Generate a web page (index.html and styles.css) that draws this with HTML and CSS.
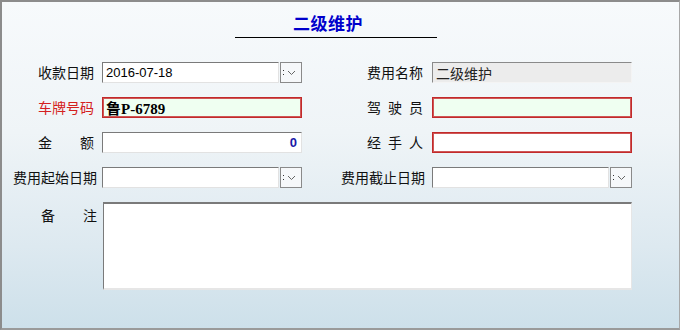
FILE: index.html
```html
<!DOCTYPE html>
<html lang="zh-CN">
<head>
    <meta charset="UTF-8">
    <title>二级维护</title>
    <link rel="stylesheet" href="styles.css">
</head>
<body>
    <div class="window">
        <div class="title-bar">
            <span class="title">二级维护</span>
        </div>

        <div class="form">
            <!-- 第一行 -->
            <label class="lbl">收款日期</label>
            <div class="date-field">
                <input class="txt" type="text" value="2016-07-18">
                <span class="drop-btn">
                    <svg width="20" height="19" viewBox="0 0 20 19"><rect x="2" y="7" width="1" height="1" fill="#333"/><rect x="2" y="11" width="1" height="1" fill="#333"/><path d="M7 8 L10.5 11.5 L14 8" fill="none" stroke="#666" stroke-width="1"/></svg>
                </span>
            </div>
            <label class="lbl lbl-r">费用名称</label>
            <input class="txt readonly" type="text" value="二级维护" readonly>

            <!-- 第二行 -->
            <label class="lbl red">车牌号码</label>
            <input class="txt must plate" type="text" value="鲁P-6789">
            <label class="lbl lbl-r">驾驶员</label>
            <input class="txt must" type="text" value="">

            <!-- 第三行 -->
            <label class="lbl">金额</label>
            <input class="txt money" type="text" value="0">
            <label class="lbl lbl-r">经手人</label>
            <input class="txt must white" type="text" value="">

            <!-- 第四行 -->
            <label class="lbl lbl-long">费用起始日期</label>
            <div class="date-field">
                <input class="txt" type="text" value="">
                <span class="drop-btn">
                    <svg width="20" height="19" viewBox="0 0 20 19"><rect x="2" y="7" width="1" height="1" fill="#333"/><rect x="2" y="11" width="1" height="1" fill="#333"/><path d="M7 8 L10.5 11.5 L14 8" fill="none" stroke="#666" stroke-width="1"/></svg>
                </span>
            </div>
            <label class="lbl lbl-r lbl-long">费用截止日期</label>
            <div class="date-field">
                <input class="txt" type="text" value="">
                <span class="drop-btn">
                    <svg width="20" height="19" viewBox="0 0 20 19"><rect x="2" y="7" width="1" height="1" fill="#333"/><rect x="2" y="11" width="1" height="1" fill="#333"/><path d="M7 8 L10.5 11.5 L14 8" fill="none" stroke="#666" stroke-width="1"/></svg>
                </span>
            </div>

            <!-- 备注 -->
            <label class="lbl lbl-top">备注</label>
            <textarea class="memo"></textarea>
        </div>
    </div>
</body>
</html>
```

FILE: styles.css
```css
body {
    margin: 0;
    font-family: "Noto Sans CJK SC", "Noto Sans", sans-serif;
    font-size: 14px;
    color: #111;
}
.window {
    width: 680px;
    height: 330px;
    box-sizing: border-box;
    border-top: 2px solid #8c8c8c;
    border-left: 2px solid #8c8c8c;
    border-right: 1px solid #a8a8a8;
    border-bottom: 2px solid #9a9a9a;
    background: linear-gradient(to bottom, #f7fafc 0%, #eff4f7 40%, #dde9f0 75%, #cde0ea 100%);
}
.title-bar {
    margin-left: 233px;
    width: 202px;
    height: 36px;
    box-sizing: border-box;
    border-bottom: 1px solid #000;
    padding: 11px 16px 0 0;
    text-align: center;
}
.title {
    font-size: 17px;
    line-height: 20px;
    font-weight: bold;
    color: #0000cc;
    letter-spacing: 0.5px;
}
.form {
    margin-top: 24px;
    display: grid;
    grid-template-columns: 100px 200px 130px 200px;
    grid-auto-rows: 21px;
    row-gap: 14px;
    align-items: center;
}
.lbl {
    justify-self: end;
    width: 56px;
    margin-right: 8px;
    line-height: 21px;
    text-align: justify;
    text-align-last: justify;
    white-space: nowrap;
}
.lbl-r {
    margin-right: 9px;
}
.lbl-long {
    width: auto;
    margin-right: 5px;
    text-align-last: auto;
}
.lbl-r.lbl-long {
    margin-right: 7px;
}
.red {
    color: #d42020;
}
.lbl-top {
    align-self: start;
    line-height: 18px;
    padding-top: 4px;
    margin-right: 5px;
}
.txt {
    width: 100%;
    height: 21px;
    box-sizing: border-box;
    margin: 0;
    padding: 0 3px;
    border-top: 1px solid #7a7a7a;
    border-left: 1px solid #7a7a7a;
    border-right: 1px solid #e2e2e2;
    border-bottom: 1px solid #e2e2e2;
    background: #fff;
    font-family: "Liberation Sans", "Noto Sans CJK SC", sans-serif;
    font-size: 13px;
    color: #000;
    outline: none;
}
.readonly {
    background: #ececec;
    font-family: "Noto Sans CJK SC", sans-serif;
    font-size: 14px;
    color: #222;
    border-top-color: #8a8a8a;
    border-left-color: #8a8a8a;
    border-right-color: #f4f4f4;
    border-bottom-color: #f4f4f4;
}
.must {
    border: 1px solid #c22a2a;
    box-shadow: inset 0 0 0 1px #cf5656;
    background: #effff1;
}
.white {
    background: #fff;
}
.plate {
    font-family: "Liberation Serif", "Noto Sans CJK SC", serif;
    font-weight: bold;
    font-size: 15px;
}
.money {
    text-align: right;
    padding-right: 4px;
    font-weight: bold;
    color: #1a1aa8;
}
.date-field {
    display: flex;
    height: 21px;
}
.date-field .txt {
    flex: 1;
    width: 0;
    min-width: 0;
}
.drop-btn {
    flex: none;
    width: 22px;
    height: 21px;
    box-sizing: border-box;
    margin-left: 1px;
    border: 1px solid #8a8a8a;
    background: #f6f8fa;
    display: flex;
    align-items: center;
    justify-content: center;
}
.memo {
    grid-column: 2 / 5;
    grid-row: span 4;
    align-self: start;
    margin: 0 0 0 1px;
    height: 88px;
    box-sizing: border-box;
    resize: none;
    border-top: 2px solid #7a7a7a;
    border-left: 1px solid #7a7a7a;
    border-right: 1px solid #e6e6e6;
    border-bottom: 2px solid #e6e6e6;
    background: #fff;
    outline: none;
}
```
